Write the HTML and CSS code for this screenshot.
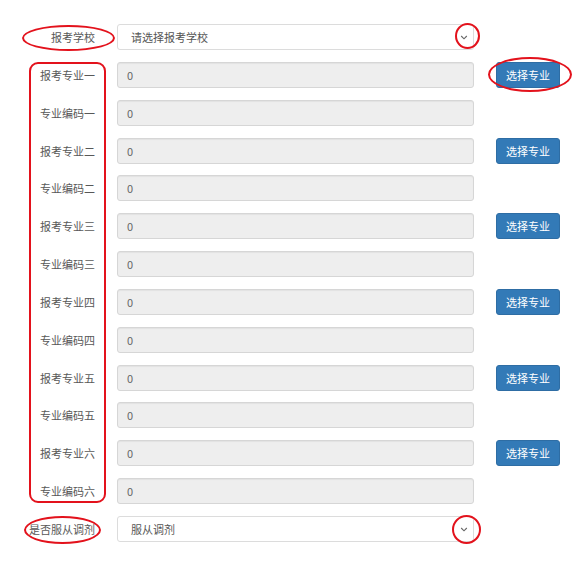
FILE: index.html
```html
<!DOCTYPE html>
<html lang="zh">
<head>
<meta charset="utf-8">
<link rel="stylesheet" href="styles.css">
</head>
<body>
<div class="page">
  <form class="form">
    <div class="row">
      <label class="lbl">报考学校</label>
      <div class="select"><span>请选择报考学校</span><svg class="chev" width="8" height="5" viewBox="0 0 8 5"><path d="M1.2 1 L4 3.8 L6.8 1" fill="none" stroke="#666" stroke-width="1.1"/></svg></div>
    </div>
    <div class="row"><label class="lbl">报考专业一</label><div class="input">0</div><button type="button" class="btn">选择专业</button></div>
    <div class="row"><label class="lbl">专业编码一</label><div class="input">0</div></div>
    <div class="row"><label class="lbl">报考专业二</label><div class="input">0</div><button type="button" class="btn">选择专业</button></div>
    <div class="row"><label class="lbl">专业编码二</label><div class="input">0</div></div>
    <div class="row"><label class="lbl">报考专业三</label><div class="input">0</div><button type="button" class="btn">选择专业</button></div>
    <div class="row"><label class="lbl">专业编码三</label><div class="input">0</div></div>
    <div class="row"><label class="lbl">报考专业四</label><div class="input">0</div><button type="button" class="btn">选择专业</button></div>
    <div class="row"><label class="lbl">专业编码四</label><div class="input">0</div></div>
    <div class="row"><label class="lbl">报考专业五</label><div class="input">0</div><button type="button" class="btn">选择专业</button></div>
    <div class="row"><label class="lbl">专业编码五</label><div class="input">0</div></div>
    <div class="row"><label class="lbl">报考专业六</label><div class="input">0</div><button type="button" class="btn">选择专业</button></div>
    <div class="row"><label class="lbl">专业编码六</label><div class="input">0</div></div>
    <div class="row">
      <label class="lbl">是否服从调剂</label>
      <div class="select"><span>服从调剂</span><svg class="chev" width="8" height="5" viewBox="0 0 8 5"><path d="M1.2 1 L4 3.8 L6.8 1" fill="none" stroke="#666" stroke-width="1.1"/></svg></div>
    </div>
  </form>
  <div class="mark m-school"></div>
  <div class="mark m-labels"></div>
  <div class="mark m-chev1"></div>
  <div class="mark m-btn"></div>
  <div class="mark m-adjust"></div>
  <div class="mark m-chev2"></div>
</div>
</body>
</html>
```
FILE: styles.css
```css
html, body {
  margin: 0;
  padding: 0;
  background: #fff;
}
body {
  font-family: "Noto Sans CJK SC", "Liberation Sans", sans-serif;
  font-size: 11px;
  color: #555;
}
.page {
  position: relative;
  width: 586px;
  height: 564px;
}
.form {
  display: flex;
  flex-direction: column;
  gap: 11.85px;
  padding-top: 24px;
  margin: 0;
}
.row {
  display: grid;
  grid-template-columns: 95px 357px 64px;
  column-gap: 22px;
  height: 26px;
  align-items: center;
}
.lbl {
  text-align: right;
  color: #585858;
  white-space: nowrap;
  line-height: 26px;
}
.input {
  box-sizing: border-box;
  height: 26px;
  line-height: 24px;
  padding-left: 9px;
  border: 1px solid #d6d6d6;
  border-radius: 3px;
  background: #eeeeee;
  box-shadow: inset 0 1px 1px rgba(0,0,0,0.05);
  color: #666;
}
.select {
  box-sizing: border-box;
  height: 26px;
  display: flex;
  align-items: center;
  justify-content: space-between;
  padding: 0 5px 0 13px;
  border: 1px solid #dcdcdc;
  border-radius: 3px;
  background: #fff;
  color: #555;
}
.chev {
  display: block;
  margin-top: 1px;
}
.btn {
  box-sizing: border-box;
  height: 26px;
  width: 64px;
  padding: 0;
  border: 1px solid #2e6da4;
  border-radius: 3px;
  background: #337ab7;
  color: #fff;
  font-family: inherit;
  font-size: 11px;
}
.mark {
  position: absolute;
  box-sizing: border-box;
  border: 2.5px solid #e3121c;
  border-radius: 50%;
  pointer-events: none;
}
.m-school { left: 22px; top: 25px; width: 93px; height: 26px; }
.m-labels { left: 29px; top: 62px; width: 77px; height: 441px; border-radius: 9px; }
.m-chev1 { left: 455px; top: 23px; width: 25px; height: 26px; }
.m-btn { left: 488px; top: 57px; width: 84px; height: 35px; }
.m-adjust { left: 24px; top: 516px; width: 77px; height: 28px; }
.m-chev2 { left: 452px; top: 515px; width: 29px; height: 29px; }
```
